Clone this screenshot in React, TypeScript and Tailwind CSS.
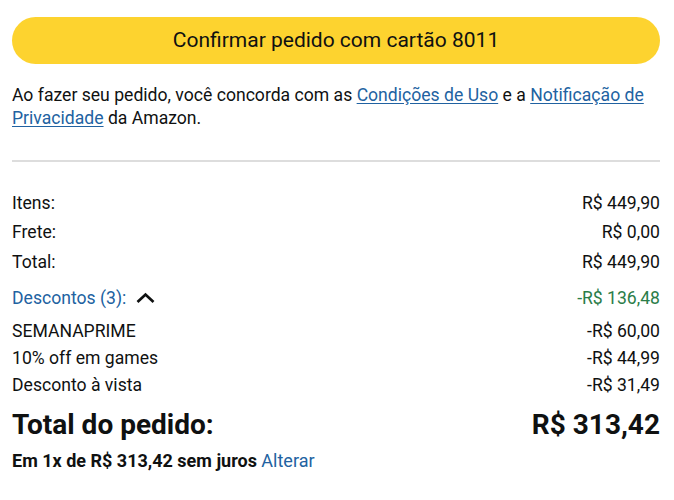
const rows = [
  { label: "Itens:", value: "R$ 449,90" },
  { label: "Frete:", value: "R$ 0,00" },
  { label: "Total:", value: "R$ 449,90" },
];

const discounts = [
  { label: "SEMANAPRIME", value: "-R$ 60,00" },
  { label: "10% off em games", value: "-R$ 44,99" },
  { label: "Desconto à vista", value: "-R$ 31,49" },
];

export default function App() {
  return (
    <div
      className="w-[674px] h-[500px] bg-white pl-3 pr-[14px] pt-[17px] text-[#0f1111]"
      style={{ fontFamily: "Roboto, 'Liberation Sans', sans-serif" }}
    >
      <button className="w-full h-[47px] rounded-full bg-[#fdd32f] text-[21px] text-[#0f1111] flex items-center justify-center">
        Confirmar pedido com cartão 8011
      </button>

      <p className="mt-[20px] text-[17.6px] leading-[23px]">
        Ao fazer seu pedido, você concorda com as{" "}
        <a className="text-[#2162a1] underline underline-offset-2">Condições de Uso</a> e a{" "}
        <a className="text-[#2162a1] underline underline-offset-2">Notificação de Privacidade</a> da Amazon.
      </p>

      <div className="mt-[30px] h-[2px] bg-[#dddddd]" />

      <div className="mt-[26px] flex flex-col text-[17.6px]">
        {rows.map((r) => (
          <div key={r.label} className="flex justify-between h-[29.5px] items-center">
            <span>{r.label}</span>
            <span>{r.value}</span>
          </div>
        ))}
        <div className="flex justify-between items-center h-[38px] mt-[3px]">
          <span className="flex items-center gap-[10px] text-[#2162a1]">
            Descontos (3):
            <svg width="19" height="12" viewBox="0 0 19 12" fill="none">
              <path d="M1.5 10 9.5 2.5 17.5 10" stroke="#0f1111" strokeWidth="2.7" />
            </svg>
          </span>
          <span className="text-[#2b7d49]">-R$ 136,48</span>
        </div>
        {discounts.map((d) => (
          <div key={d.label} className="flex justify-between h-[27px] items-center">
            <span>{d.label}</span>
            <span>{d.value}</span>
          </div>
        ))}
      </div>

      <div className="mt-[5px] flex justify-between items-center text-[28px] font-bold">
        <span>Total do pedido:</span>
        <span>R$ 313,42</span>
      </div>
      <p className="mt-[1px] text-[18px] font-bold">
        Em 1x de R$ 313,42 sem juros <a className="text-[#2162a1] font-normal">Alterar</a>
      </p>
    </div>
  );
}
